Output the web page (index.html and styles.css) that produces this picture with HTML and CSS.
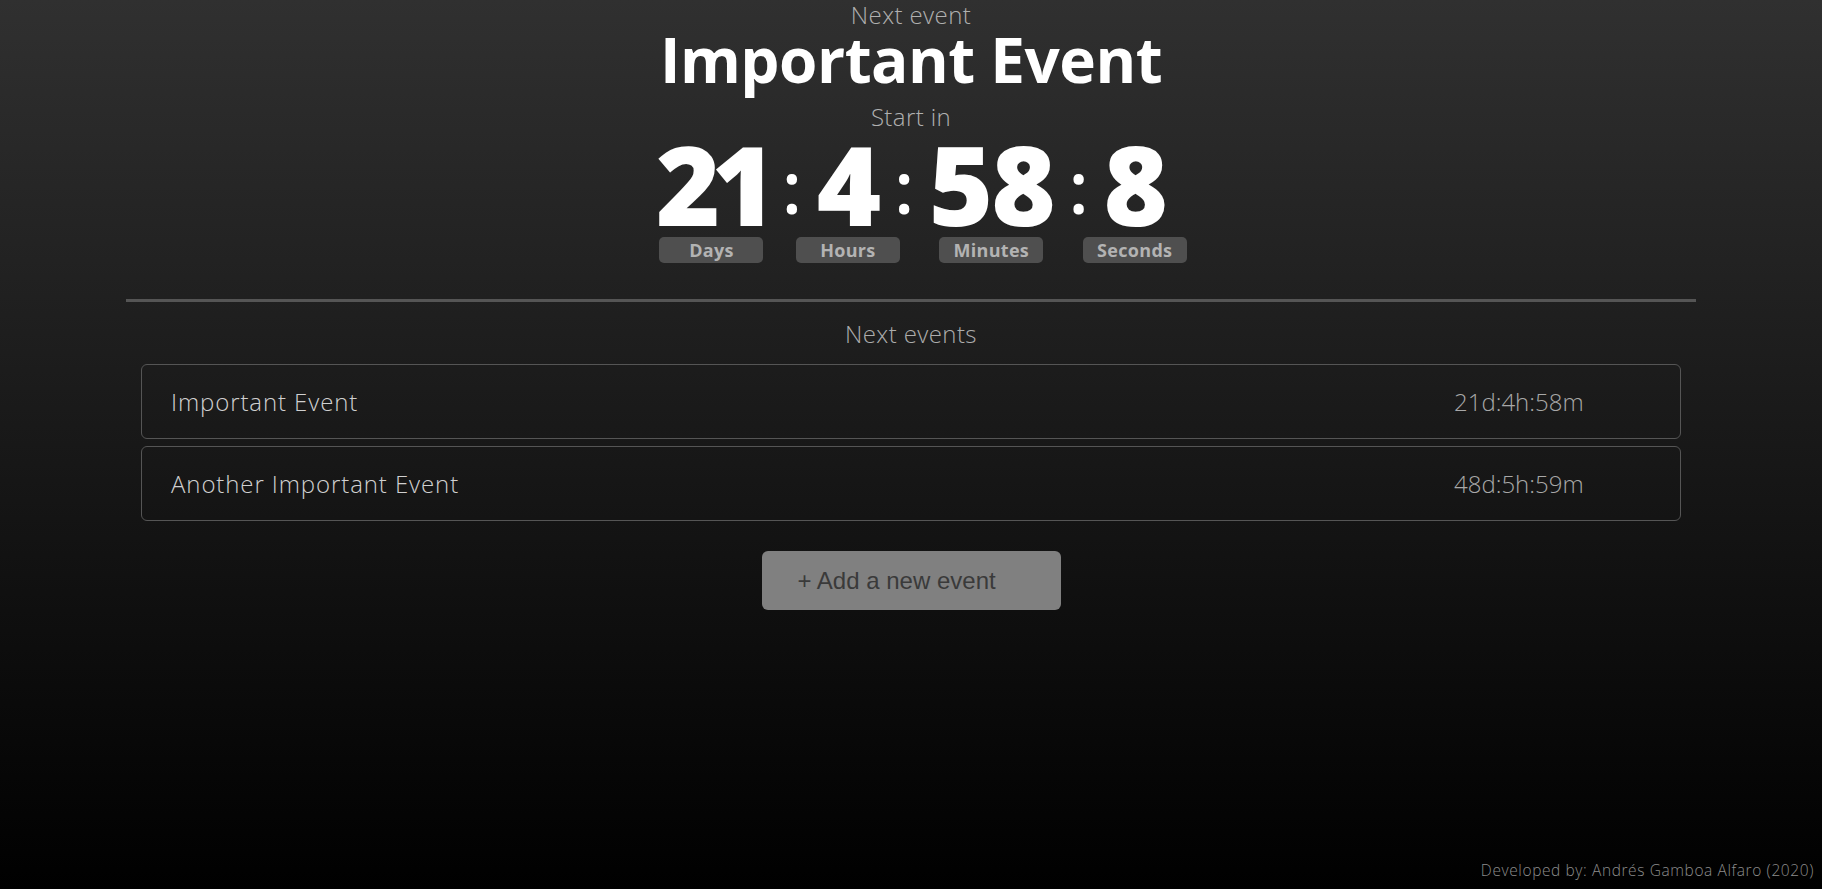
FILE: index.html
```html
<!DOCTYPE html>
<html lang="en">
<head>
<meta charset="utf-8">
<title>Countdown</title>
<link rel="stylesheet" href="styles.css">
</head>
<body>
<main class="page">
  <section class="hero">
    <p class="eyebrow">Next event</p>
    <h1 class="title">Important Event</h1>
    <p class="eyebrow start">Start in</p>
    <div class="countdown">
      <div class="unit"><span class="num num--tight">21</span><span class="label">Days</span></div>
      <span class="sep">:</span>
      <div class="unit"><span class="num">4</span><span class="label">Hours</span></div>
      <span class="sep">:</span>
      <div class="unit"><span class="num">58</span><span class="label">Minutes</span></div>
      <span class="sep">:</span>
      <div class="unit"><span class="num">8</span><span class="label">Seconds</span></div>
    </div>
  </section>
  <section class="content">
    <hr class="divider">
    <h2 class="list-title">Next events</h2>
    <ul class="event-list">
      <li class="event-card"><span class="event-name">Important Event</span><span class="event-time">21d:4h:58m</span></li>
      <li class="event-card"><span class="event-name">Another Important Event</span><span class="event-time">48d:5h:59m</span></li>
    </ul>
    <div class="actions"><button class="add-btn" type="button">+ Add a new event</button></div>
  </section>
  <footer class="footer">Developed by: Andrés Gamboa Alfaro (2020)</footer>
</main>
</body>
</html>
```

FILE: styles.css
```css
* { box-sizing: border-box; }
html, body { margin: 0; padding: 0; }
body {
  font-family: "Open Sans", "Noto Sans", sans-serif;
  background: linear-gradient(to bottom, #303030 0%, #000000 100%);
  min-height: 100vh;
  color: #fff;
}
.page {
  min-height: 100vh;
  display: flex;
  flex-direction: column;
}
.hero {
  display: flex;
  flex-direction: column;
  align-items: center;
}
.eyebrow {
  margin: 0;
  font-size: 24px;
  line-height: 30px;
  font-weight: 300;
  color: #b0b0b0;
  letter-spacing: 0.4px;
}
.title {
  margin: 0;
  font-size: 62px;
  line-height: 58px;
  font-weight: 700;
  color: #ffffff;
  letter-spacing: -0.5px;
}
.start { margin-top: 14px; }
.countdown {
  display: flex;
  align-items: flex-start;
  justify-content: center;
  margin-top: 3px;
}
.unit {
  display: flex;
  flex-direction: column;
  align-items: center;
}
.num {
  font-size: 110px;
  line-height: 96px;
  font-weight: 800;
  color: #ffffff;
  letter-spacing: -2px;
}
.num--tight {
  letter-spacing: -9px;
}
.label {
  width: 104px;
  height: 26px;
  margin: 6px -60px 0;
  background: #4f4f4f;
  border-radius: 5px;
  color: #b3b3b3;
  font-size: 18px;
  line-height: 27px;
  font-weight: 700;
  text-align: center;
  letter-spacing: 0.3px;
}
.sep {
  font-size: 72px;
  line-height: 80px;
  font-weight: 600;
  color: #ffffff;
  margin: 11px 15px 0;
}
.content {
  padding: 0 126px;
}
.divider {
  margin: 36px 0 0;
  border: 0;
  height: 3px;
  background: #555555;
}
.list-title {
  margin: 17px 0 0;
  font-size: 24px;
  line-height: 30px;
  font-weight: 300;
  color: #acacac;
  text-align: center;
  letter-spacing: 0.4px;
}
.event-list {
  list-style: none;
  margin: 15px 15px 0;
  padding: 0;
  display: flex;
  flex-direction: column;
  gap: 7px;
}
.event-card {
  height: 75px;
  border: 1px solid #555555;
  border-radius: 6px;
  display: flex;
  align-items: center;
  justify-content: space-between;
  padding: 0 30px 0 29px;
  font-size: 24px;
  font-weight: 300;
}
.event-name { color: #d0d0d0; letter-spacing: 0.9px; }
.event-time { width: 196px; color: #a8a8a8; letter-spacing: 0; }
.actions {
  display: flex;
  justify-content: center;
  margin-top: 30px;
}
.add-btn {
  width: 299px;
  height: 59px;
  border: 0;
  border-radius: 6px;
  background: #808080;
  color: #3a3a3a;
  font-family: "Liberation Sans", Arial, sans-serif;
  font-size: 24px;
  text-align: left;
  padding: 0 0 0 36px;
}
.footer {
  margin-top: auto;
  text-align: right;
  padding: 0 8px 9px 0;
  font-size: 15.5px;
  line-height: 20px;
  font-weight: 300;
  color: #8c8c8c;
  letter-spacing: 0.6px;
}
```
